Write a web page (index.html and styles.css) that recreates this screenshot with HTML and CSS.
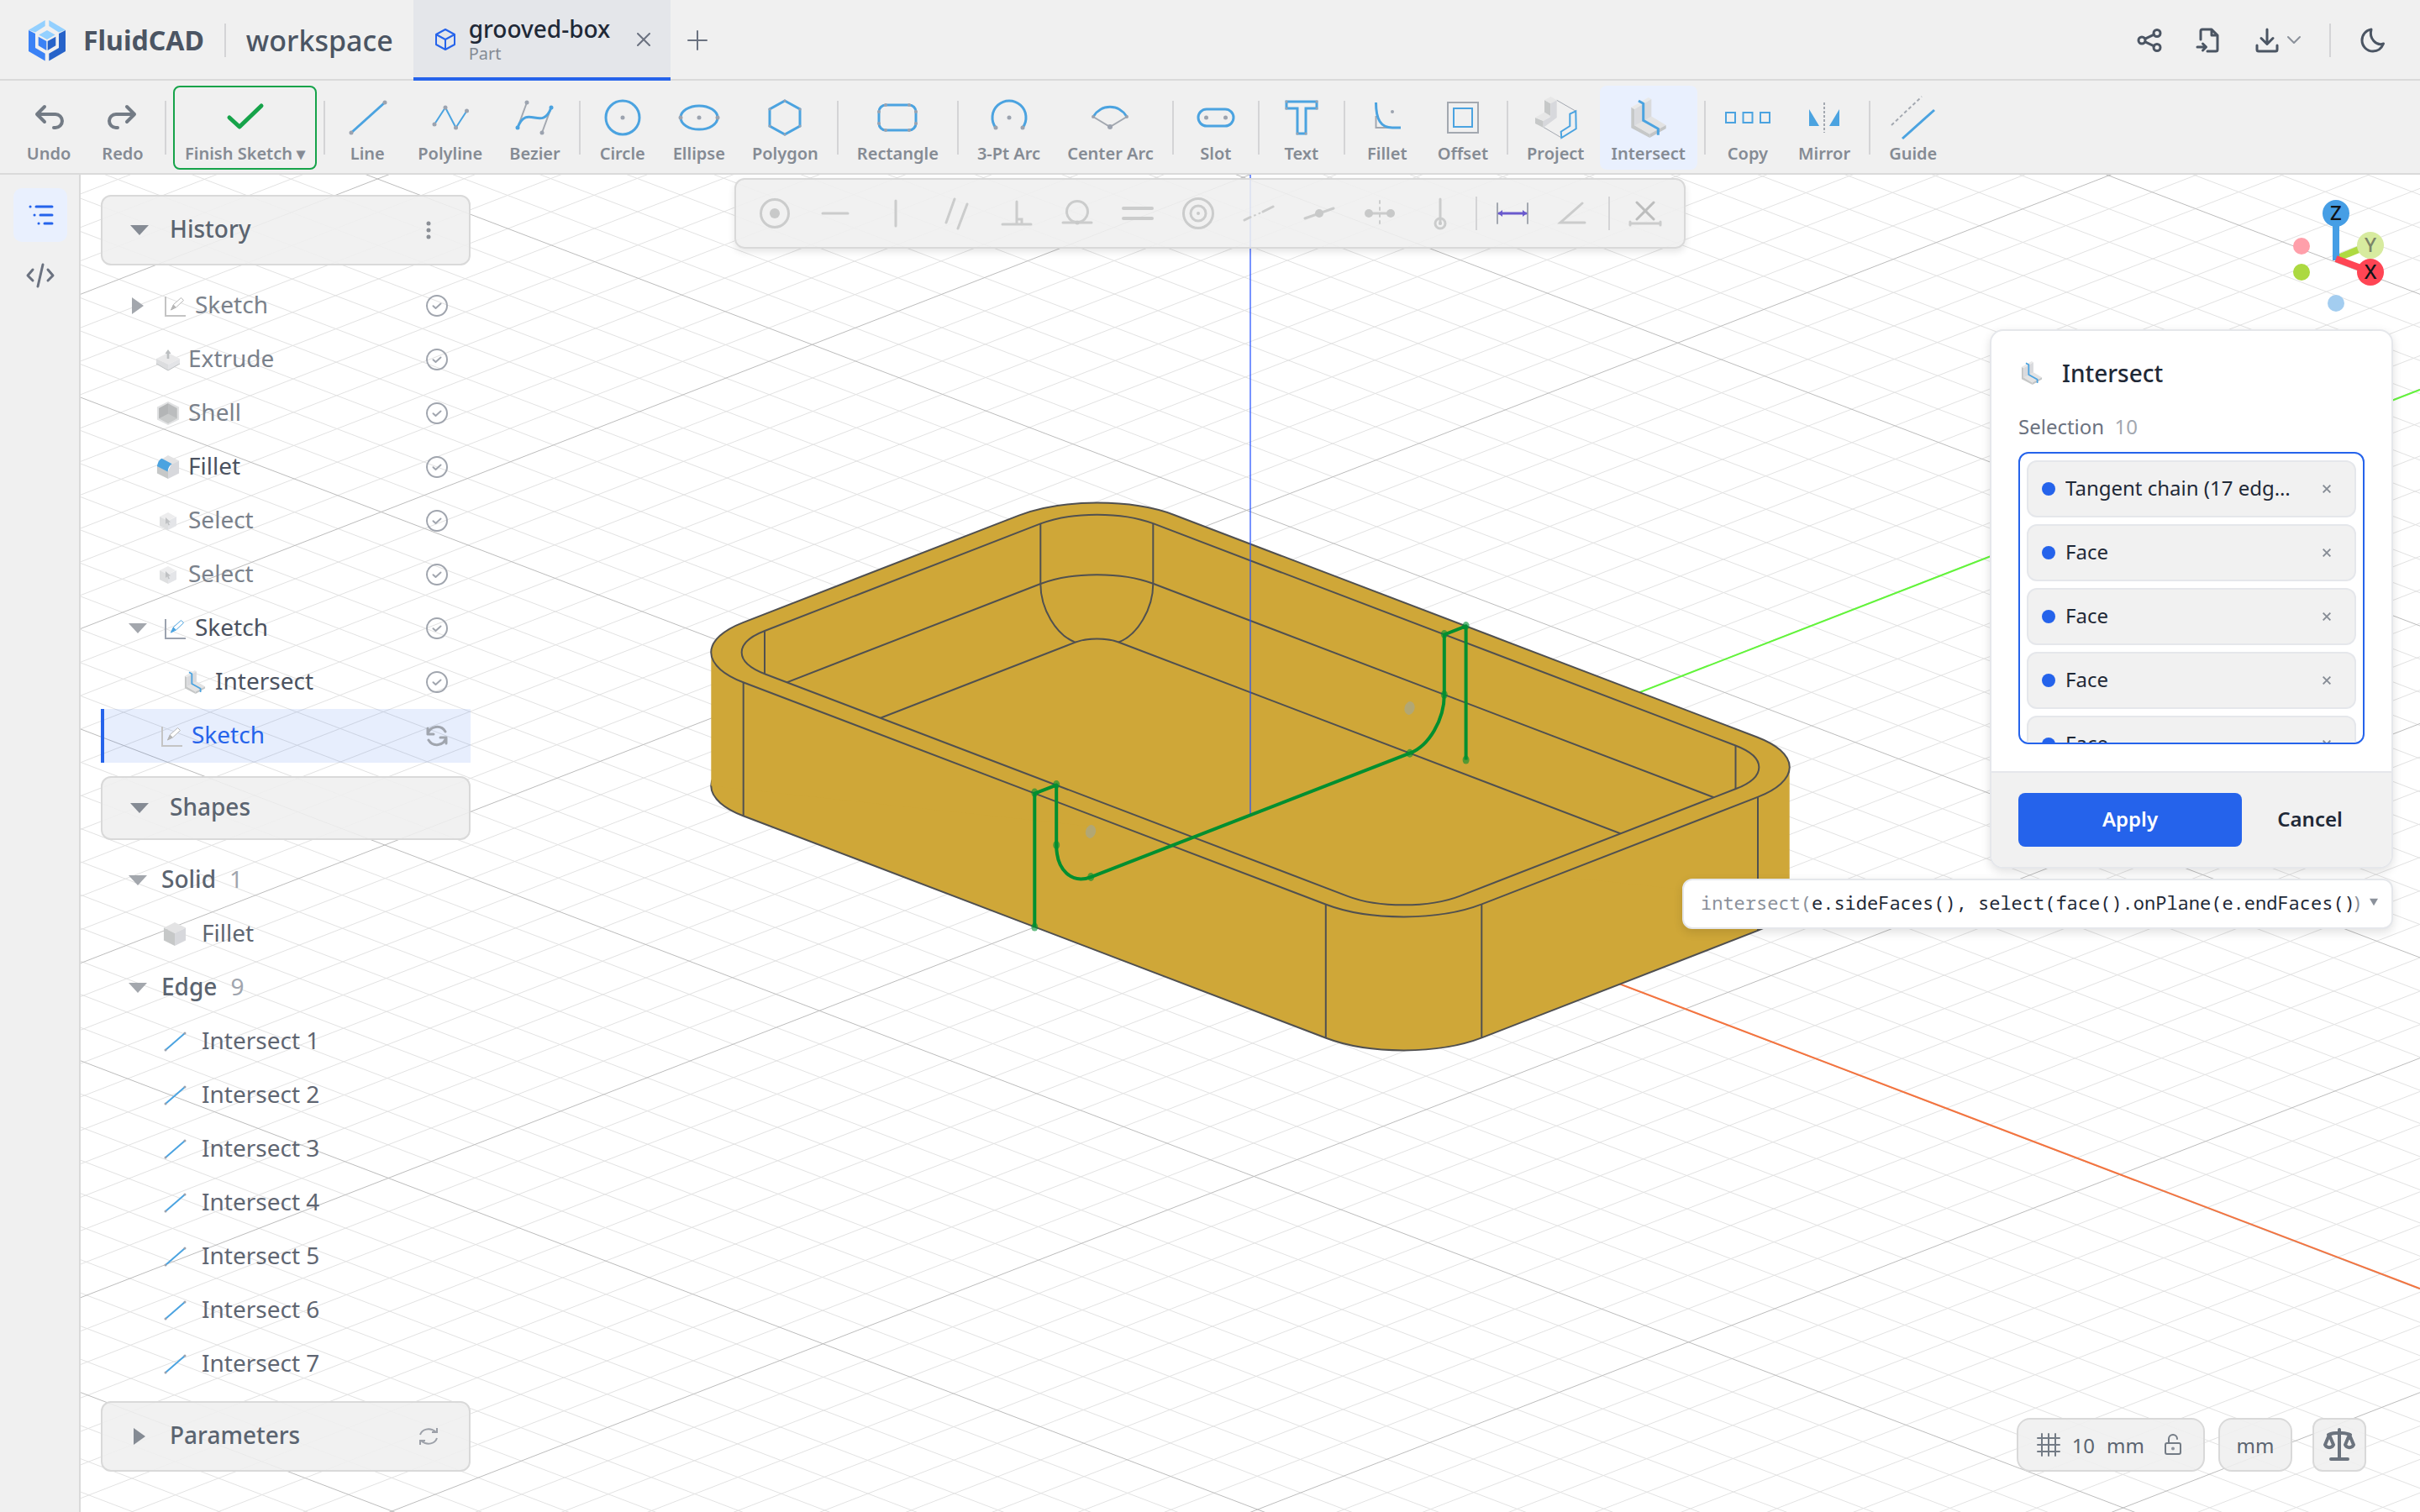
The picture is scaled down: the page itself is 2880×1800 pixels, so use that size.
FILE: index.html
```html
<!DOCTYPE html>
<html lang="en">
<head>
<meta charset="utf-8">
<title>FluidCAD - grooved-box</title>
<link rel="stylesheet" href="styles.css">
</head>
<body>
<svg class="defs" aria-hidden="true">
  <symbol id="i-intersect" viewBox="0 0 48 48">
    <path fill="#c6c8c8" d="M3.300 11.700 7.300 14V33L25.300 43.500V48L3.300 36.300Z"/>
    <path fill="#e9e9e9" d="M3.300 11.700 23.700 0 27.300 2 7.300 14Z"/>
    <path fill="#d9dadd" d="M7.300 14 27.300 2V23.300L7.300 34Z"/>
    <path fill="#e3e3e3" d="M7.300 33.500 27.300 22.500 44.700 33 25.300 43.700Z"/>
    <path fill="#c3c5c6" d="M25.300 43.500 44.700 33V37L25.300 48Z"/>
    <path class="s-blue w3" d="M12 4 17.700 7.300V27.300L35.300 37.300V44.700"/>
  </symbol>
  <symbol id="i-sketch" viewBox="0 0 28 28">
    <path class="axes" d="M3 3V26H27"/>
    <path class="pen" d="M9.500 19 12.500 12.500 21.500 4.500 24.500 7.500 15.500 16Z"/>
    <path class="tip" d="M9 19.500 12.300 12.500 15.500 15.500Z"/>
  </symbol>
  <symbol id="i-cube" viewBox="0 0 28 30">
    <path fill="#e3e3e4" d="M14 0 28 7 14 14 0 7Z"/><path fill="#c6c8c8" d="M0 7 14 14V30L0 23Z"/><path fill="#d7d8dc" d="M28 7 14 14V30L28 23Z"/>
  </symbol>
  <symbol id="i-select" viewBox="0 0 28 28">
    <path fill="#ededee" d="M14 4 23 9 14 14 4 9Z"/><path fill="#dedfe0" d="M4 9 14 14V25L4 20Z"/><path fill="#e4e5e8" d="M24 9 14 14V25L24 20Z"/><path fill="#bfc1c3" d="M11 10 17 15.500 14.500 15.700 16 19 14.500 19.500 13.200 16.300 11 18Z"/>
  </symbol>
  <symbol id="i-extrude" viewBox="0 0 28 28">
    <path fill="#e9e9ea" d="M14 6 28 13 14 20 0 13Z"/><path fill="#dcdddf" d="M0 13 14 20V27L0 19Z"/><path fill="#e3e4e7" d="M28 13 14 20V27L28 19Z"/><path d="M0 19 14 27 28 19" fill="none" stroke="#bfc2c4"/><path fill="#bcbfc1" d="M14 2 17.500 7H15.300V13H12.700V7H10.500Z"/>
  </symbol>
  <symbol id="i-shell" viewBox="0 0 28 30">
    <path fill="#e0e1e2" d="M14 0 28 7V23L14 30 0 23V7Z"/><path fill="#bbbdbe" d="M14 2.500 25.500 8.500V21.500L14 27.500 2.500 21.500V8.500Z"/><path fill="#c9cbcb" d="M14 15.500 25.500 21.500 14 27.500 2.500 21.500Z"/><path fill="#b3b5b6" d="M14 2.500 2.500 8.500V21.500L14 15.500Z"/>
  </symbol>
  <symbol id="i-fillet" viewBox="0 0 28 30">
    <path fill="#e3e3e4" d="M14 0 28 7 14 15 1 8Z"/><path fill="#c6c8c8" d="M0 12 14 19V30L0 23Z"/><path fill="#d7d8dc" d="M28 7 18 12 14 20V30L28 23Z"/><path fill="#4ba3e0" d="M0 14C1 9 3 5 6 4L19 11C16 12.500 14 17 13.500 21Z"/>
  </symbol>
  <symbol id="i-check" viewBox="0 0 28 28">
    <circle cx="14" cy="14" r="12"/><path d="M9.500 14.200 12.500 17 18.500 11.500"/>
  </symbol>
  <symbol id="i-sync" viewBox="0 0 28 28">
    <path d="M3 12A11.500 11.500 0 0 1 24 9M25 16A11.500 11.500 0 0 1 4 19M3 5V12H10M25 23V16H18"/>
  </symbol>
  <symbol id="i-edge" viewBox="0 0 28 28">
    <path class="s-blue" d="M3 24 26 4"/><circle class="dot" cx="3" cy="24" r="1.500"/><circle class="dot" cx="26" cy="4" r="1.500"/>
  </symbol>
  <symbol id="i-down" viewBox="0 0 24 24"><path d="M1 6H23L12 18Z"/></symbol>
  <symbol id="i-right" viewBox="0 0 24 24"><path d="M5 2V22L19 12Z"/></symbol>
  <symbol id="i-x" viewBox="0 0 16 16"><path d="M1 1 15 15M15 1 1 15"/></symbol>
</svg>

<header class="topbar">
  <div class="brand">
    <svg class="logo" viewBox="0 0 44 49" aria-hidden="true">
      <path fill="#93d0ff" d="M0 11.700 19.700 0V7L8 14.500ZM44 11.700 24.300 0V7L36 14.500ZM22 12 31.700 17.500 22 23 12.300 17.500Z"/>
      <path fill="#3b82f6" d="M0 12 8 16V33L19.700 39.700V48.500L0 37ZM11.700 19.700 21.300 25V36L11.700 30.300Z"/>
      <path fill="#2763c9" d="M44 12 36 16V33L24.300 39.700V48.500L44 37ZM32.300 19.700 22.700 25V36L32.300 30.300Z"/>
    </svg>
    <span class="brand-name">FluidCAD</span>
  </div>
  <span class="vline"></span>
  <span class="workspace">workspace</span>
  <div class="tab">
    <svg class="tab-icon" viewBox="0 0 28 28" aria-hidden="true"><path d="M14 2 25 8V20L14 26 3 20V8ZM3 8 14 14 25 8M14 14V26"/></svg>
    <div class="tab-text"><span class="tab-name">grooved-box</span><span class="tab-sub">Part</span></div>
    <button class="icon-btn" aria-label="Close tab"><svg width="16" height="16"><use href="#i-x"/></svg></button>
  </div>
  <button class="icon-btn add" aria-label="New tab"><svg width="24" height="24" viewBox="0 0 24 24"><path d="M12 1V23M1 12H23"/></svg></button>
  <div class="top-actions">
    <button class="icon-btn dark" aria-label="Share"><svg width="32" height="32" viewBox="0 0 32 32"><circle cx="7" cy="16" r="4"/><circle cx="25" cy="7.500" r="4"/><circle cx="25" cy="24.500" r="4"/><path d="M11 14.200 21.500 9.200M11 17.800 21.500 22.800"/></svg></button>
    <button class="icon-btn dark" aria-label="Import file"><svg width="32" height="32" viewBox="0 0 32 32"><path d="M7 15V5A2 2 0 0 1 9 3H20L27 10V27A2 2 0 0 1 25 29H15M20 3V10H27M3 24H13M9.500 20 13.500 24 9.500 28"/></svg></button>
    <button class="icon-btn dark pair" aria-label="Download"><svg width="32" height="32" viewBox="0 0 32 32"><path d="M16 3V20M9 13.500 16 20.500 23 13.500M4 22V27A2 2 0 0 0 6 29H26A2 2 0 0 0 28 27V22"/></svg><svg class="thin" width="16" height="16" viewBox="0 0 16 16"><path d="M1 4 8 11 15 4"/></svg></button>
    <span class="vline"></span>
    <button class="icon-btn dark" aria-label="Dark mode"><svg width="32" height="32" viewBox="0 0 32 32"><path d="M14 3C7 4 3 10 3 16A13 13 0 0 0 16 29C22 29 26 26 28.500 20C20 23 11 14 14 3Z"/></svg></button>
  </div>
</header>

<nav class="toolbar" aria-label="Sketch tools">
  <button class="tool"><svg class="hist" viewBox="0 0 48 48"><path d="M19 11 10 20 19 29M10 20H32A8 8 0 0 1 32 36H30"/></svg>Undo</button>
  <button class="tool"><svg class="hist" viewBox="0 0 48 48"><path d="M29 11 38 20 29 29M38 20H16A8 8 0 0 0 16 36H18"/></svg>Redo</button>
  <i class="sep"></i>
  <button class="tool finish"><svg class="ok" viewBox="0 0 48 48"><path d="M5 24 17 35 43 10"/></svg><span>Finish Sketch ▾</span></button>
  <i class="sep"></i>
  <button class="tool"><svg viewBox="0 0 48 48"><path class="s-blue w3" d="M5 42 45 6"/><circle class="dot" cx="5" cy="42" r="2.500"/><circle class="dot" cx="45" cy="6" r="2.500"/></svg>Line</button>
  <button class="tool"><svg viewBox="0 0 48 48"><path class="s-blue" d="M5 32 18 12 30.500 36 43.500 16"/><circle class="dot" cx="5" cy="32" r="2.500"/><circle class="dot" cx="18" cy="12" r="2.500"/><circle class="dot" cx="30.500" cy="36" r="2.500"/><circle class="dot" cx="43.500" cy="16" r="2.500"/></svg>Polyline</button>
  <button class="tool"><svg viewBox="0 0 48 48"><path class="s-gray" d="M3 36 14 6M32 42 43 12"/><path class="s-blue w3" d="M3 36C14 6 32 42 43 12"/><circle class="dot" cx="14" cy="6" r="2.500"/><circle class="dot" cx="32" cy="42" r="2.500"/><circle class="bdot" cx="3" cy="36" r="2.500"/><circle class="bdot" cx="43" cy="12" r="2.500"/></svg>Bezier</button>
  <i class="sep"></i>
  <button class="tool"><svg viewBox="0 0 48 48"><circle class="s-blue w3" cx="24" cy="24" r="20"/><circle class="dot" cx="24" cy="24" r="2.500"/></svg>Circle</button>
  <button class="tool"><svg viewBox="0 0 48 48"><ellipse class="s-blue w3" cx="24" cy="24" rx="22" ry="14"/><circle class="dot" cx="24" cy="24" r="2.500"/><circle class="dot" cx="2" cy="24" r="2.500"/><circle class="dot" cx="46" cy="24" r="2.500"/></svg>Ellipse</button>
  <button class="tool"><svg viewBox="0 0 48 48"><path class="s-blue w3" d="M24 4 42 14V34L24 44 6 34V14Z"/><circle class="dot" cx="24" cy="4" r="1.500"/><circle class="dot" cx="42" cy="14" r="1.500"/><circle class="dot" cx="42" cy="34" r="1.500"/><circle class="dot" cx="24" cy="44" r="1.500"/><circle class="dot" cx="6" cy="34" r="1.500"/><circle class="dot" cx="6" cy="14" r="1.500"/></svg>Polygon</button>
  <i class="sep"></i>
  <button class="tool"><svg viewBox="0 0 48 48"><rect class="s-blue w3" x="2" y="9" width="44" height="30" rx="8"/><circle class="dot" cx="10" cy="9" r="2"/><circle class="dot" cx="38" cy="9" r="2"/><circle class="dot" cx="10" cy="39" r="2"/><circle class="dot" cx="38" cy="39" r="2"/><circle class="dot" cx="2" cy="17" r="2"/><circle class="dot" cx="2" cy="31" r="2"/><circle class="dot" cx="46" cy="17" r="2"/><circle class="dot" cx="46" cy="31" r="2"/></svg>Rectangle</button>
  <i class="sep"></i>
  <button class="tool"><svg viewBox="0 0 48 48"><path class="s-blue w3" d="M8 36A20 20 0 1 1 40 36"/><circle class="dot" cx="24" cy="24" r="2.500"/><circle class="dot" cx="8" cy="36" r="2.500"/><circle class="dot" cx="40" cy="36" r="2.500"/></svg>3-Pt Arc</button>
  <button class="tool"><svg viewBox="0 0 48 48"><path class="s-gray" d="M4 23 24 35 44 23"/><path class="s-blue w3" d="M4 23A23 23 0 0 1 44 23"/><circle class="dot" cx="24" cy="35" r="3"/><circle class="dot" cx="4" cy="23" r="2"/><circle class="dot" cx="44" cy="23" r="2"/></svg>Center Arc</button>
  <i class="sep"></i>
  <button class="tool"><svg viewBox="0 0 48 48"><rect class="s-blue w3" x="3" y="14" width="42" height="20" rx="10"/><circle class="dot" cx="12.500" cy="24" r="2.500"/><circle class="dot" cx="35.500" cy="24" r="2.500"/></svg>Slot</button>
  <i class="sep"></i>
  <button class="tool"><svg viewBox="0 0 48 48"><path class="s-blue w3" d="M6 5H42V13H29V43H19V13H6Z"/><g class="dot"><circle cx="6" cy="5" r="1.500"/><circle cx="42" cy="5" r="1.500"/><circle cx="42" cy="13" r="1.500"/><circle cx="6" cy="13" r="1.500"/><circle cx="19" cy="43" r="1.500"/><circle cx="29" cy="43" r="1.500"/></g></svg>Text</button>
  <i class="sep"></i>
  <button class="tool"><svg viewBox="0 0 48 48"><path class="s-gray" d="M10.500 22V36H26"/><path class="s-blue w3" d="M10.500 6C10.500 26 16 36 30 36H40"/><circle class="dot" cx="30" cy="17" r="2"/></svg>Fillet</button>
  <button class="tool"><svg viewBox="0 0 48 48"><rect class="s-gray" x="6" y="6" width="36" height="36"/><rect class="s-blue" x="13" y="13" width="22" height="22"/></svg>Offset</button>
  <i class="sep"></i>
  <button class="tool"><svg viewBox="0 0 48 48"><path class="s-gray thin-line" d="M25.700 3.300 48.300 16.300M9.700 35.300 31.300 48"/><path fill="#c6c8c8" d="M11 3 18.300 7.300V23L11 18ZM0 24 9.700 28V36L0 31Z"/><path fill="#e7e7e7" d="M11 3 18.700 -1 25.700 3.300 18.300 7.300ZM0 24 11 17.500 18.300 22 9.700 28Z"/><path fill="#d7d8dc" d="M18.300 7.300 25.700 3.300V24L9.700 36V28L18.300 23Z"/><path class="s-blue" d="M48.300 16.300 48.700 37.300 31.300 48 30.700 40.700 41.300 34V19.700Z"/></svg>Project</button>
  <button class="tool active"><svg viewBox="0 0 48 48"><use href="#i-intersect"/></svg>Intersect</button>
  <i class="sep"></i>
  <button class="tool"><svg viewBox="0 0 48 48"><path class="s-blue" d="M-2 18H9V30H-2ZM18.500 18H29.500V30H18.500ZM39 18H50V30H39Z"/></svg>Copy</button>
  <button class="tool"><svg viewBox="0 0 48 48"><path fill="#4ba3e0" d="M6 14 18 34H6ZM42 14 30 34H42Z"/><path class="s-gray" stroke-dasharray="3 2" d="M24 6V42"/></svg>Mirror</button>
  <i class="sep"></i>
  <button class="tool"><svg viewBox="0 0 48 48"><path class="s-gray" stroke-dasharray="4 3" d="M-2 33 34 -1"/><path class="s-blue w3" d="M11 49 49 15"/></svg>Guide</button>
</nav>

<main class="main">
  <aside class="rail">
    <button class="rail-btn on" aria-label="Model tree"><svg width="32" height="32" viewBox="0 0 32 32"><path d="M11 6H30M16 16H30M21 26H30M4 6H4.100M9 16H9.100M14 26H14.100"/></svg></button>
    <button class="rail-btn" aria-label="Code"><svg width="36" height="32" viewBox="0 0 36 32"><path d="M9 9 3 16 9 22M27 9 33 16 27 22M21 3 15 29"/></svg></button>
  </aside>

  <section class="viewport">
    <svg class="scene" viewBox="96 208 2784 1592" preserveAspectRatio="xMidYMid slice" aria-label="3D view of grooved box">
      <defs>
        <rect id="rim-out" x="-.85" y="-.5" width="1.7" height="1" rx=".18"/>
        <rect id="rim-in" x="-.8" y="-.45" width="1.6" height=".9" rx=".13"/>
        <rect id="floor" x="-.72" y="-.37" width="1.44" height=".74" rx=".05"/>
        <clipPath id="opening"><use href="#rim-in" transform="matrix(517.2 197.250 512.900 -199.250 1488 845)"/></clipPath>
      </defs>
      <g transform="matrix(517.2 197.250 512.900 -199.250 1488 1004)">
        <path id="minor" class="minor"/>
        <path id="major" class="major"/>
      </g>
      <path class="ax-x" d="M1488 1004 2880 1534"/>
      <path class="ax-y" d="M1488 1004 2880 464"/>
      <use class="body line" href="#rim-out" transform="matrix(517.2 197.250 512.900 -199.250 1488 1004)"/>
      <path class="body" d="M846.300 776.600 2129.700 913.400V1072.400L846.300 935.600Z"/>
      <path class="line" d="M884.700 812.500V971.500M1577.800 1076V1235M1763.300 1076V1235M2092 949V1107"/>
      <use class="body line" href="#rim-out" transform="matrix(517.2 197.250 512.900 -199.250 1488 845)"/>
      <use class="line" href="#rim-in" transform="matrix(517.2 197.250 512.900 -199.250 1488 845)"/>
      <g clip-path="url(#opening)">
        <use class="line" href="#rim-in" transform="matrix(517.2 197.250 512.900 -199.250 1488 916.600)"/>
        <use class="line" href="#floor" transform="matrix(517.2 197.250 512.900 -199.250 1488 970.400)"/>
        <path class="line" d="M1238.300 623.500V695C1238.300 724.700 1256.800 755.900 1279.700 764.600M1372.300 623.500V694.700C1372.300 724.400 1354 755.700 1331.300 764.500M910 751V880M2065.500 887V960"/>
      </g>
      <path class="ax-z" d="M1488 208V970"/>
      <path class="cut" d="M1231.300 1103.600V944.600L1257.200 934.600V1006C1257.200 1035.800 1275.500 1052.900 1298.200 1044.100L1677.800 896.700C1700.500 887.900 1718.800 856.700 1718.800 827V755.500L1744.600 745.400V904.600"/>
      <g class="pts">
        <ellipse cx="1231.300" cy="1103.600" rx="4" ry="5"/><ellipse cx="1231.300" cy="943.600" rx="4" ry="5"/><ellipse cx="1257.200" cy="934" rx="4" ry="5"/><ellipse cx="1257.200" cy="1006" rx="4" ry="5"/><ellipse cx="1298.200" cy="1044" rx="4" ry="5"/><ellipse cx="1677.800" cy="896.700" rx="4" ry="5"/><ellipse cx="1718.800" cy="827" rx="4" ry="5"/><ellipse cx="1718.800" cy="755" rx="4" ry="5"/><ellipse cx="1744.600" cy="745" rx="4" ry="5"/><ellipse cx="1744.600" cy="904.600" rx="4" ry="5"/>
      </g>
      <ellipse class="mid" cx="1298" cy="990" rx="6" ry="8" transform="rotate(15 1298 990)"/>
      <ellipse class="mid" cx="1677.500" cy="843" rx="6" ry="8" transform="rotate(15 1677.500 843)"/>
    </svg>

    <div class="constraints" role="toolbar" aria-label="Constraints">
      <button aria-label="Coincident"><svg viewBox="0 0 48 48"><circle cx="24" cy="24" r="16.500"/><circle class="f" cx="24" cy="24" r="6"/></svg></button>
      <button aria-label="Horizontal"><svg viewBox="0 0 48 48"><path d="M9 24H39"/></svg></button>
      <button aria-label="Vertical"><svg viewBox="0 0 48 48"><path d="M24 9V39"/></svg></button>
      <button aria-label="Parallel"><svg viewBox="0 0 48 48"><path d="M22 7 12 35M37 13 26 42"/></svg></button>
      <button aria-label="Perpendicular"><svg viewBox="0 0 48 48"><path d="M7 37H41M24 10V37M24 31H30V37"/></svg></button>
      <button aria-label="Tangent"><svg viewBox="0 0 48 48"><circle cx="24" cy="22" r="12.500"/><path d="M7 35H41"/><circle class="f" cx="24" cy="35" r="2.500"/></svg></button>
      <button aria-label="Equal"><svg viewBox="0 0 48 48"><path stroke-width="4" d="M7 18H41M7 30H41"/></svg></button>
      <button aria-label="Concentric"><svg viewBox="0 0 48 48"><circle cx="24" cy="24" r="17.500"/><circle cx="24" cy="24" r="9"/><circle class="f" cx="24" cy="24" r="2"/></svg></button>
      <button aria-label="Collinear"><svg viewBox="0 0 48 48"><path d="M29 22 41 16M7 32 14 28.500"/><path stroke-width="2" stroke-dasharray="1 5" d="M19 26.500 27 23"/></svg></button>
      <button aria-label="Midpoint"><svg viewBox="0 0 48 48"><path d="M7 30 41 18"/><circle class="f" cx="24" cy="24" r="5"/></svg></button>
      <button aria-label="Symmetric"><svg viewBox="0 0 48 48"><path d="M11 24H37"/><path stroke-width="2" stroke-dasharray="3 5" d="M24 9V39"/><circle class="f" cx="11" cy="24" r="5"/><circle class="f" cx="37" cy="24" r="5"/></svg></button>
      <button aria-label="Fix"><svg viewBox="0 0 48 48"><path d="M24 7V36"/><circle cx="24" cy="36" r="6"/><circle class="f" cx="24" cy="36" r="2"/></svg></button>
      <i class="sep"></i>
      <button class="dim" aria-label="Dimension"><svg viewBox="0 0 48 48"><path class="s-gray" d="M6 12V36M42 12V36"/><path d="M8 24H40"/><path class="f" d="M7 24 12 20V28ZM41 24 36 20V28Z"/></svg></button>
      <button aria-label="Angle"><svg viewBox="0 0 48 48"><path d="M35 12 9 35H38"/></svg></button>
      <i class="sep"></i>
      <button aria-label="Delete constraint"><svg viewBox="0 0 48 48"><path stroke="#bcbdbd" d="M14 11 34 31M34 11 14 31"/><path d="M6 36H42M6 34V38M42 34V38"/></svg></button>
    </div>

    <aside class="side">
      <div class="head tall"><button class="toggle"><svg class="arrow"><use href="#i-down"/></svg><span>History</span></button><button class="mini" aria-label="History menu"><svg class="fill" viewBox="0 0 28 28"><circle cx="14" cy="6" r="2.500"/><circle cx="14" cy="14" r="2.500"/><circle cx="14" cy="22" r="2.500"/></svg></button></div>
      <ul class="tree">
        <li class="row dim-row branch"><svg class="arrow"><use href="#i-right"/></svg><svg class="ico sk off"><use href="#i-sketch"/></svg><span>Sketch</span><svg class="st"><use href="#i-check"/></svg></li>
        <li class="row dim-row"><svg class="ico"><use href="#i-extrude"/></svg><span>Extrude</span><svg class="st"><use href="#i-check"/></svg></li>
        <li class="row dim-row"><svg class="ico"><use href="#i-shell"/></svg><span>Shell</span><svg class="st"><use href="#i-check"/></svg></li>
        <li class="row"><svg class="ico"><use href="#i-fillet"/></svg><span>Fillet</span><svg class="st"><use href="#i-check"/></svg></li>
        <li class="row dim-row"><svg class="ico"><use href="#i-select"/></svg><span>Select</span><svg class="st"><use href="#i-check"/></svg></li>
        <li class="row dim-row"><svg class="ico"><use href="#i-select"/></svg><span>Select</span><svg class="st"><use href="#i-check"/></svg></li>
        <li class="row branch"><svg class="arrow"><use href="#i-down"/></svg><svg class="ico sk"><use href="#i-sketch"/></svg><span>Sketch</span><svg class="st"><use href="#i-check"/></svg></li>
        <li class="row child"><svg class="ico"><use href="#i-intersect"/></svg><span>Intersect</span><svg class="st"><use href="#i-check"/></svg></li>
        <li class="row current"><svg class="ico sk off"><use href="#i-sketch"/></svg><span>Sketch</span><svg class="st"><use href="#i-sync"/></svg></li>
      </ul>
      <div class="head"><button class="toggle"><svg class="arrow"><use href="#i-down"/></svg><span>Shapes</span></button></div>
      <ul class="tree shapes">
        <li class="row group"><svg class="arrow"><use href="#i-down"/></svg><b>Solid</b><em>1</em></li>
        <li class="row leaf"><svg class="ico"><use href="#i-cube"/></svg><span>Fillet</span></li>
        <li class="row group"><svg class="arrow"><use href="#i-down"/></svg><b>Edge</b><em>9</em></li>
        <li class="row leaf"><svg class="ico"><use href="#i-edge"/></svg><span>Intersect 1</span></li>
        <li class="row leaf"><svg class="ico"><use href="#i-edge"/></svg><span>Intersect 2</span></li>
        <li class="row leaf"><svg class="ico"><use href="#i-edge"/></svg><span>Intersect 3</span></li>
        <li class="row leaf"><svg class="ico"><use href="#i-edge"/></svg><span>Intersect 4</span></li>
        <li class="row leaf"><svg class="ico"><use href="#i-edge"/></svg><span>Intersect 5</span></li>
        <li class="row leaf"><svg class="ico"><use href="#i-edge"/></svg><span>Intersect 6</span></li>
        <li class="row leaf"><svg class="ico"><use href="#i-edge"/></svg><span>Intersect 7</span></li>
      </ul>
      <div class="head tall"><button class="toggle"><svg class="arrow"><use href="#i-right"/></svg><span>Parameters</span></button><button class="mini" aria-label="Refresh parameters"><svg viewBox="0 0 28 28"><path d="M4 12C6 6 15 2 23 9M24 4V9H18M24 16C22 22 13 26 5 19M4 24V19H10"/></svg></button></div>
    </aside>

    <div class="right">
      <svg class="gizmo" viewBox="0 0 136 144" role="img" aria-label="Axis gizmo">
        <path stroke="#aeda42" d="M68 72 100 59"/>
        <path stroke="#469ee5" d="M68 74V18"/>
        <path stroke="#ff4554" d="M68 72 108 87"/>
        <circle cx="27" cy="57" r="10" fill="#ff9faa"/><circle cx="27" cy="88" r="10" fill="#acd940"/><circle cx="68" cy="125" r="10" fill="#a3cdf0"/>
        <circle cx="68" cy="18" r="16" fill="#469ee5"/><circle cx="109" cy="56" r="16" fill="#d7eb9f"/><circle cx="109" cy="88" r="16" fill="#ff4554"/>
        <text x="68" y="26">Z</text><text class="faint" x="109" y="64">Y</text><text x="109" y="96">X</text>
      </svg>
      <section class="panel">
        <div class="panel-body">
          <h2><svg width="28" height="28"><use href="#i-intersect"/></svg>Intersect</h2>
          <p class="sel">Selection <em>10</em></p>
          <ul class="chips">
            <li><span class="bullet"></span><span class="chip-text">Tangent chain (17 edges)</span><button aria-label="Remove"><svg width="10" height="10"><use href="#i-x"/></svg></button></li>
            <li><span class="bullet"></span><span class="chip-text">Face</span><button aria-label="Remove"><svg width="10" height="10"><use href="#i-x"/></svg></button></li>
            <li><span class="bullet"></span><span class="chip-text">Face</span><button aria-label="Remove"><svg width="10" height="10"><use href="#i-x"/></svg></button></li>
            <li><span class="bullet"></span><span class="chip-text">Face</span><button aria-label="Remove"><svg width="10" height="10"><use href="#i-x"/></svg></button></li>
            <li><span class="bullet"></span><span class="chip-text">Face</span><button aria-label="Remove"><svg width="10" height="10"><use href="#i-x"/></svg></button></li>
          </ul>
        </div>
        <footer><button class="apply">Apply</button><button class="cancel">Cancel</button></footer>
      </section>
      <div class="code"><span class="fn">intersect(</span><span class="args">e.sideFaces(), select(face().onPlane(e.endFaces()</span><span class="fn">)</span><svg width="10" height="10" viewBox="0 0 24 24"><path fill="#8b919b" d="M0 2H24L12 22Z"/></svg></div>
      <div class="status">
        <button class="pill"><svg width="28" height="28" viewBox="0 0 28 28"><path d="M1 6H27M1 14H27M1 22H27M6 1V27M14 1V27M22 1V27"/></svg><span>10</span><span>mm</span><svg class="lock" width="20" height="26" viewBox="0 0 20 26"><rect x="1" y="11" width="18" height="13" rx="2"/><path d="M5 11V6A5 5 0 0 1 15 6"/><circle class="f" cx="10" cy="17.500" r="2"/></svg></button>
        <button class="pill unit">mm</button>
        <button class="pill square" aria-label="Measure"><svg width="40" height="40" viewBox="0 0 40 40"><path d="M20 2V37M10 37H30M7 8C14 5 26 5 33 8M8 8 3 20A5.500 5.500 0 0 0 13 20ZM32 8 27 20A5.500 5.500 0 0 0 37 20Z"/></svg></button>
      </div>
    </div>
  </section>
</main>
<script src="script.js"></script>
</body>
</html>
```
FILE: styles.css
```css
* { box-sizing: border-box; }
html, body { height: 100%; }
body {
  margin: 0;
  display: flex;
  flex-direction: column;
  background: #fff;
  color: #4b5563;
  font-family: "Noto Sans", sans-serif;
  font-size: 28px;
}
button { font: inherit; color: inherit; background: none; border: 0; padding: 0; cursor: pointer; }
ul { list-style: none; margin: 0; padding: 0; }
em, i { font-style: normal; }
svg { display: block; flex: none; overflow: visible; }
.defs { position: absolute; width: 0; height: 0; }

.s-blue { fill: none; stroke: #4ba3e0; stroke-width: 2; }
.s-gray { fill: none; stroke: #a3a8b0; stroke-width: 2; }
.w3 { stroke-width: 3; }
.dot { fill: #9ca3af; }
.bdot { fill: #4ba3e0; }

/* top bar */
.topbar {
  flex: none;
  display: flex;
  align-items: center;
  height: 96px;
  padding: 2px 34px 0;
  background: #f0f0f0;
  border-bottom: 2px solid #dadada;
}
.brand { display: flex; align-items: center; gap: 21px; }
.logo { width: 44px; height: 49px; }
.brand-name { font-size: 32px; font-weight: 700; line-height: 44px; }
.vline { width: 2px; height: 40px; background: #d4d4d6; margin: 0 24px; }
.workspace { font-size: 34px; font-weight: 500; line-height: 44px; }
.tab {
  display: flex;
  align-items: center;
  gap: 14px;
  width: 306px;
  height: 96px;
  margin: 0 18px 0 24px;
  padding: 2px 18px 0 24px;
  background: #e4e6ea;
  border-bottom: 4px solid #2563eb;
}
.tab-icon { width: 28px; height: 28px; fill: none; stroke: #2563eb; stroke-width: 2; stroke-linejoin: round; }
.tab-text { display: flex; flex-direction: column; flex: 1; }
.tab-name { font-size: 28px; font-weight: 500; line-height: 34px; color: #1f2937; }
.tab-sub { font-size: 20px; line-height: 26px; color: #858b94; }
.icon-btn { display: flex; align-items: center; justify-content: center; min-width: 28px; height: 40px; }
.icon-btn svg { fill: none; stroke: #6b7280; stroke-width: 2; stroke-linecap: round; stroke-linejoin: round; }
.icon-btn.dark svg { stroke: #4b5563; stroke-width: 3; }
.icon-btn.dark .thin { stroke: #8b919b; stroke-width: 2; }
.pair { gap: 8px; }
.top-actions { display: flex; align-items: center; gap: 38px; margin-left: auto; margin-right: 6px; }
.top-actions .vline { margin: 0 -4px; }

/* toolbar */
.toolbar {
  flex: none;
  display: flex;
  align-items: center;
  gap: 4px;
  padding: 6px 16px 4px;
  background: #f0f0f0;
  border-bottom: 2px solid #dadada;
}
.tool {
  display: flex;
  flex-direction: column;
  align-items: center;
  gap: 5px;
  min-width: 84px;
  height: 100px;
  padding: 14px 14px 0;
  border-radius: 8px;
  font-size: 20px;
  font-weight: 600;
  line-height: 28px;
  color: #858b94;
  white-space: nowrap;
}
.tool svg { width: 48px; height: 48px; }
.tool.active { background: #e9f0fe; }
.tool.finish { border: 2px solid #16a34a; padding: 12px 12px 0; }
.hist path { fill: none; stroke: #737b85; stroke-width: 4; stroke-linecap: round; stroke-linejoin: round; }
.ok path { fill: none; stroke: #16a34a; stroke-width: 5; stroke-linecap: round; stroke-linejoin: round; }
.thin-line { stroke-width: 1; }
.sep { width: 2px; height: 64px; margin: 0 4px; background: #d4d4d6; }

/* main area */
.main { flex: 1; min-height: 0; display: flex; }
.rail {
  width: 96px;
  padding: 16px 14px 0 16px;
  display: flex;
  flex-direction: column;
  gap: 8px;
  background: #f0f0f0;
  border-right: 2px solid #dadada;
}
.rail-btn { display: flex; align-items: center; justify-content: center; width: 64px; height: 64px; border-radius: 10px; }
.rail-btn svg { fill: none; stroke: #6b7280; stroke-width: 3; stroke-linecap: round; stroke-linejoin: round; }
.rail-btn.on { background: #e9f0fe; }
.rail-btn.on svg { stroke: #2563eb; }

.viewport { position: relative; flex: 1; min-width: 0; display: flex; justify-content: space-between; overflow: hidden; }
.scene { position: absolute; inset: 0; width: 100%; height: 100%; }
.minor, .major { fill: none; vector-effect: non-scaling-stroke; }
.minor { stroke: #e2e2e2; stroke-width: 1px; }
.major { stroke: #bcbcbc; stroke-width: 1px; }
.ax-x { stroke: #f4743f; stroke-width: 2; }
.ax-y { stroke: #62f53a; stroke-width: 2; }
.ax-z { stroke: #2350ff; stroke-opacity: .62; stroke-width: 2; }
.line { fill: none; stroke: #505050; stroke-width: 2px; vector-effect: non-scaling-stroke; }
.scene rect { vector-effect: non-scaling-stroke; }
.body { fill: #cfa738; }
.cut { fill: none; stroke: #008f30; stroke-width: 4; stroke-linejoin: round; }
.pts { fill: #008f30; fill-opacity: .6; }
.mid { fill: #b2a774; }

/* constraint bar */
.constraints {
  position: absolute;
  z-index: 1;
  top: 4px;
  left: calc(50% - 48px);
  transform: translateX(-50%);
  display: flex;
  align-items: center;
  gap: 4px;
  height: 84px;
  padding: 0 12px;
  background: rgba(239, 239, 239, .88);
  border: 2px solid #d9d9d9;
  border-radius: 12px;
  box-shadow: 0 4px 8px rgba(0, 0, 0, .1);
}
.constraints button { width: 68px; height: 68px; display: flex; align-items: center; justify-content: center; }
.constraints svg { width: 48px; height: 48px; fill: none; stroke: #cbcccc; stroke-width: 3; stroke-linecap: round; }
.constraints .f { fill: #c8c9c9; stroke: none; }
.constraints .sep { height: 40px; }
.constraints .dim svg { stroke: #6a5acd; }
.constraints .dim .f { fill: #6a5acd; }

/* side panels */
.side {
  position: relative;
  width: 440px;
  margin-left: 24px;
  padding: 24px 0 48px;
  display: flex;
  flex-direction: column;
  gap: 16px;
}
.head {
  flex: none;
  display: flex;
  align-items: center;
  justify-content: space-between;
  height: 76px;
  padding: 0 34px 0 32px;
  background: rgba(239, 239, 239, .88);
  border: 2px solid #d9d9d9;
  border-radius: 12px;
}
.head.tall { height: 84px; }
.toggle { display: flex; align-items: center; gap: 24px; font-weight: 500; line-height: 40px; color: #5b6470; }
.toggle span, .row span, .row b, .row em { padding-bottom: 4px; }
.arrow { width: 24px; height: 24px; fill: #858b94; }
.mini svg { width: 28px; height: 28px; fill: none; stroke: #9ca0a8; stroke-width: 2; }
.mini svg.fill { fill: #8b8f96; stroke: none; }
.row { display: flex; align-items: center; gap: 10px; height: 64px; padding: 0 26px 0 66px; color: #4b5260; line-height: 40px; }
.row .arrow { fill: #a3a7ad; }
.row span { flex: 1; }
.branch { padding-left: 32px; }
.branch .arrow { margin-right: 8px; }
.child { padding-left: 98px; }
.dim-row { color: #7a818b; }
.current { border-left: 4px solid #2563eb; background: rgba(37, 99, 235, .11); color: #2563eb; }
.ico { width: 28px; height: 28px; }
.sk { --p: #4ba3e0; fill: none; stroke: #9ca3af; }
.sk.off { --p: #b5b5b5; stroke: #c4c4c4; }
.axes { fill: none; stroke-width: 2; }
.pen { fill: #fff; stroke: var(--p); stroke-width: 1; }
.tip { fill: var(--p); stroke: none; }
.st { width: 28px; height: 28px; fill: none; stroke: #a0a5ae; stroke-width: 2; stroke-linecap: round; stroke-linejoin: round; }
.current .st { stroke-width: 3; }
.shapes { flex: 1 1 0; min-height: 0; }
.group { padding-left: 32px; gap: 16px; }
.group b { font-weight: 500; color: #5b6470; }
.group em { color: #a0a5ae; }
.leaf { padding-left: 74px; gap: 18px; color: #5f6672; }

/* right column */
.right {
  position: relative;
  display: flex;
  flex-direction: column;
  align-items: flex-end;
  gap: 12px;
  padding: 28px 32px 48px 0;
}
.gizmo { width: 136px; height: 144px; font-size: 24px; font-weight: 500; }
.gizmo path { fill: none; stroke-width: 8; }
.gizmo text { text-anchor: middle; fill: #101418; }
.gizmo .faint { fill: #7b8468; }
.panel {
  width: 480px;
  background: #fff;
  border: 2px solid #e5e7eb;
  border-radius: 16px;
  box-shadow: 0 4px 12px rgba(0, 0, 0, .12);
  overflow: hidden;
}
.panel-body { padding: 26px 32px 32px; }
h2 { margin: 0; display: flex; align-items: center; gap: 22px; height: 48px; padding-left: 2px; font-size: 28px; font-weight: 500; color: #1f2937; }
.sel { margin: 24px 0 14px; font-size: 24px; line-height: 32px; color: #6b7280; }
.sel em { margin-left: 6px; color: #a3a8b0; }
.chips { height: 348px; padding: 8px; border: 2px solid #2563eb; border-radius: 12px; display: flex; flex-direction: column; gap: 8px; overflow: hidden; }
.chips li { flex: none; display: flex; align-items: center; gap: 12px; height: 68px; padding: 0 16px; background: #f1f1f1; border: 2px solid #e5e7eb; border-radius: 12px; font-size: 24px; color: #1f2937; }
.bullet { flex: none; width: 16px; height: 16px; border-radius: 50%; background: #2563eb; }
.chip-text { flex: 1; min-width: 0; padding-bottom: 4px; overflow: hidden; text-overflow: ellipsis; white-space: nowrap; }
.chips button { width: 34px; height: 32px; display: flex; align-items: center; justify-content: center; }
.chips li button { margin-left: 6px; }
.chips svg { stroke: #858b94; stroke-width: 3; }
.panel footer { display: flex; gap: 16px; padding: 24px 32px; background: #f1f1f1; border-top: 2px solid #e5e7eb; }
.apply, .cancel { height: 64px; padding-bottom: 4px; border-radius: 8px; font-size: 24px; font-weight: 600; }
.apply { flex: 1; background: #2563eb; color: #fff; }
.cancel { width: 130px; color: #1f2937; }
.code {
  display: flex;
  align-items: center;
  width: 846px;
  height: 60px;
  padding: 0 16px 4px 20px;
  background: #fff;
  border: 2px solid #e5e7eb;
  border-radius: 12px;
  box-shadow: 0 4px 12px rgba(0, 0, 0, .12);
  font-family: "Noto Sans Mono", "DejaVu Sans Mono", monospace;
  font-size: 22px;
  color: #1f2937;
  white-space: nowrap;
}
.code .fn { color: #8b919b; }
.code .args { flex: 1; min-width: 0; overflow: hidden; }
.code svg { margin-left: 8px; }
.status { display: flex; gap: 16px; margin: auto 32px 0 0; }
.pill {
  display: flex;
  align-items: center;
  justify-content: center;
  height: 64px;
  padding: 0 26px 0 22px;
  background: rgba(239, 239, 239, .88);
  border: 2px solid #d9d9d9;
  border-radius: 16px;
  font-size: 24px;
  color: #5b6470;
}
.pill span { margin-left: 14px; }
.pill svg { fill: none; stroke: #737b85; stroke-width: 2; stroke-linecap: round; }
.pill .lock { margin-left: 24px; }
.lock .f { fill: #8b919b; stroke: none; }
.pill.unit { width: 88px; padding: 0; }
.pill.square { width: 64px; padding: 0; margin-left: 8px; border-radius: 12px; }
.pill.square svg { stroke: #6b737e; stroke-width: 4; stroke-linejoin: round; }
```
FILE: script.js
```js
// Ground plane grid: ten minor cells to each major cell.
const reach = 4;
let minor = "";
let major = "";
for (let i = -reach * 10; i <= reach * 10; i++) {
  const t = i / 10;
  const d = `M${t} ${-reach}V${reach}M${-reach} ${t}H${reach}`;
  if (i % 10 === 0) major += d;
  else minor += d;
}
document.getElementById("minor").setAttribute("d", minor);
document.getElementById("major").setAttribute("d", major);
```
